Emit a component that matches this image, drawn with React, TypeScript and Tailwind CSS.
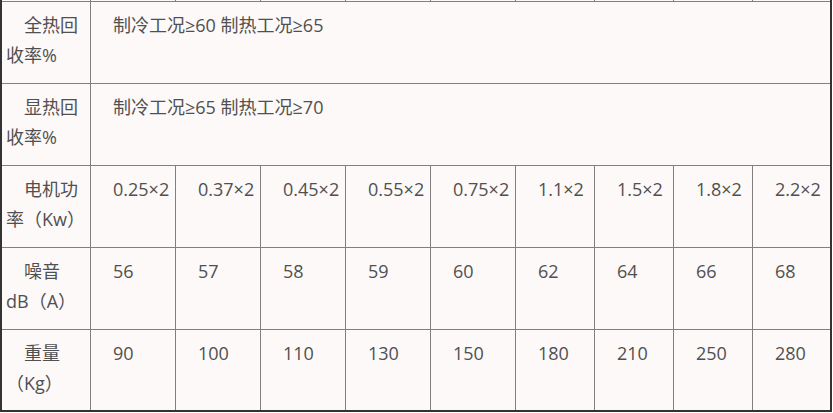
const motor = ["0.25×2", "0.37×2", "0.45×2", "0.55×2", "0.75×2", "1.1×2", "1.5×2", "1.8×2", "2.2×2"];
const noise = ["56", "57", "58", "59", "60", "62", "64", "66", "68"];
const weight = ["90", "100", "110", "130", "150", "180", "210", "250", "280"];

const cell = "bg-[#fdf9f9] pl-[4px] pr-[4px] pt-[8px] indent-[18px] leading-[30px]";

function Label({ a, b }: { a: string; b: string }) {
  return (
    <div className={cell}>
      {a}
      <br />
      {b}
    </div>
  );
}

function Row({ label, values }: { label: [string, string]; values: string[] }) {
  return (
    <>
      <Label a={label[0]} b={label[1]} />
      {values.map((v, i) => (
        <div key={i} className={cell + " whitespace-nowrap"}>
          {v}
        </div>
      ))}
    </>
  );
}

export default function App() {
  return (
    <div className="w-[832px] bg-white">
      <div
        className="grid grid-cols-[88px_repeat(5,84px)_repeat(3,78px)_77px] grid-rows-[1px_repeat(4,81px)_80px] gap-px bg-[#808080] border-l-2 border-r-2 border-b-2 border-[#333333] text-[18px] text-[#505050]"
        style={{ fontFamily: '"Open Sans", "Noto Sans CJK SC", sans-serif' }}
      >
        {/* sliver of the row above */}
        {Array.from({ length: 10 }).map((_, i) => (
          <div key={i} className="bg-[#fdf9f9]" />
        ))}

        <Label a="全热回" b="收率%" />
        <div className={cell + " col-span-9"}>制冷工况≥60 制热工况≥65</div>

        <Label a="显热回" b="收率%" />
        <div className={cell + " col-span-9"}>制冷工况≥65 制热工况≥70</div>

        <Row label={["电机功", "率（Kw）"]} values={motor} />
        <Row label={["噪音", "dB（A）"]} values={noise} />
        <Row label={["重量", "（Kg）"]} values={weight} />
      </div>
    </div>
  );
}
